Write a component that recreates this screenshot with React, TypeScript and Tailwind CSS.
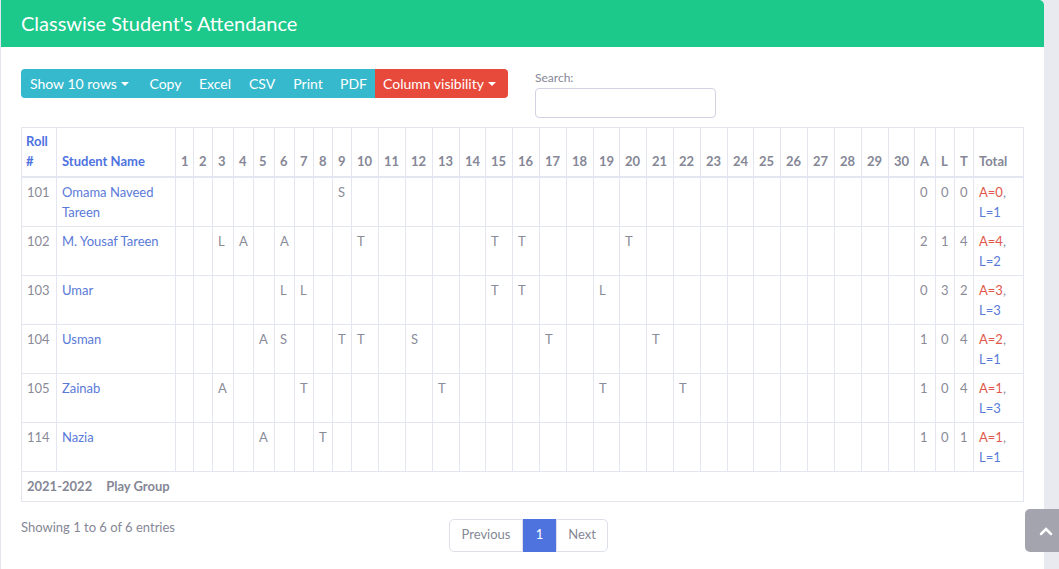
import React from "react";

type Row = {
  roll: string;
  name: string;
  marks: Record<number, string>;
  a: string;
  l: string;
  t: string;
  ta: string;
  tl: string;
};

const rows: Row[] = [
  { roll: "101", name: "Omama Naveed Tareen", marks: { 9: "S" }, a: "0", l: "0", t: "0", ta: "A=0", tl: "L=1" },
  { roll: "102", name: "M. Yousaf Tareen", marks: { 3: "L", 4: "A", 6: "A", 10: "T", 15: "T", 16: "T", 20: "T" }, a: "2", l: "1", t: "4", ta: "A=4", tl: "L=2" },
  { roll: "103", name: "Umar", marks: { 6: "L", 7: "L", 15: "T", 16: "T", 19: "L" }, a: "0", l: "3", t: "2", ta: "A=3", tl: "L=3" },
  { roll: "104", name: "Usman", marks: { 5: "A", 6: "S", 9: "T", 10: "T", 12: "S", 17: "T", 21: "T" }, a: "1", l: "0", t: "4", ta: "A=2", tl: "L=1" },
  { roll: "105", name: "Zainab", marks: { 3: "A", 7: "T", 13: "T", 19: "T", 22: "T" }, a: "1", l: "0", t: "4", ta: "A=1", tl: "L=3" },
  { roll: "114", name: "Nazia", marks: { 5: "A", 8: "T" }, a: "1", l: "0", t: "1", ta: "A=1", tl: "L=1" },
];

const dayWidths = [
  18, 19, 21, 20, 21, 20, 19, 19, 19,
  27, 27, 27, 27, 26, 27, 27, 27, 27, 26, 27, 27, 27, 27, 26, 27, 27, 27, 27, 27, 26,
];
const days = Array.from({ length: 30 }, (_, i) => i + 1);

const font = { fontFamily: "Lato, 'Noto Sans', sans-serif" };

export default function App() {
  return (
    <div className="relative flex w-[1059px] h-[569px] overflow-hidden bg-[#e9eaef]" style={font}>
      <div className="w-[1044px] h-full bg-white border-l border-[#e3e6f0] rounded-tr-[5px] flex flex-col">
        <div className="h-[47px] bg-[#1cc88a] rounded-tr-[5px] flex items-center px-[20px] pb-[2px]">
          <h1 className="text-white text-[20px] leading-none">Classwise Student's Attendance</h1>
        </div>
        <div className="px-[20px] pt-[22px]">
          <div className="flex items-start">
            <div className="flex h-[30px] text-[14px] text-white pb-[1px]">
              <div className="w-[120px] bg-[#36b9cc] rounded-l-[4px] flex items-center pl-[9px]">
                Show 10 rows
                <span className="ml-[4px] inline-block w-0 h-0 border-l-[4px] border-r-[4px] border-t-[4px] border-l-transparent border-r-transparent border-t-white" />
              </div>
              <div className="w-[49px] bg-[#36b9cc] flex items-center justify-center">Copy</div>
              <div className="w-[50px] bg-[#36b9cc] flex items-center justify-center">Excel</div>
              <div className="w-[44px] bg-[#36b9cc] flex items-center justify-center">CSV</div>
              <div className="w-[48px] bg-[#36b9cc] flex items-center justify-center">Print</div>
              <div className="w-[43px] bg-[#36b9cc] flex items-center justify-center">PDF</div>
              <div className="w-[133px] bg-[#e74a3b] rounded-r-[4px] flex items-center pl-[8px]">
                Column visibility
                <span className="ml-[4px] inline-block w-0 h-0 border-l-[4px] border-r-[4px] border-t-[4px] border-l-transparent border-r-transparent border-t-white" />
              </div>
            </div>
            <div className="ml-[27px] flex flex-col">
              <label className="text-[12px] text-[#858796] leading-[16px] mt-[1px]">Search:</label>
              <input className="mt-[2px] w-[181px] h-[30px] border border-[#d1d3e2] rounded-[4px] outline-none" />
            </div>
          </div>

          <table className="mt-[9px] table-fixed border-collapse w-[1002px] text-[13px] leading-[19.5px] text-[#8a8b99]">
            <colgroup>
              <col className="w-[35px]" />
              <col className="w-[119px]" />
              {dayWidths.map((w, i) => (
                <col key={i} style={{ width: w }} />
              ))}
              <col className="w-[21px]" />
              <col className="w-[19px]" />
              <col className="w-[19px]" />
              <col className="w-[50px]" />
            </colgroup>
            <thead>
              <tr className="align-bottom font-bold text-[#858796]">
                <th className="border border-[#e3e6f0] border-b-2 px-[4px] pt-[4px] pb-[5px] text-left text-[#4e73df]">
                  Roll #
                </th>
                <th className="border border-[#e3e6f0] border-b-2 px-[5px] pt-[4px] pb-[5px] text-left text-[#4e73df] whitespace-nowrap">
                  Student Name
                </th>
                {days.map((d) => (
                  <th key={d} className="border border-[#e3e6f0] border-b-2 px-[5px] pt-[4px] pb-[5px] text-left whitespace-nowrap">
                    {d}
                  </th>
                ))}
                <th className="border border-[#e3e6f0] border-b-2 px-[5px] pt-[4px] pb-[5px] text-left">A</th>
                <th className="border border-[#e3e6f0] border-b-2 px-[5px] pt-[4px] pb-[5px] text-left">L</th>
                <th className="border border-[#e3e6f0] border-b-2 px-[5px] pt-[4px] pb-[5px] text-left">T</th>
                <th className="border border-[#e3e6f0] border-b-2 px-[5px] pt-[4px] pb-[5px] text-left">Total</th>
              </tr>
            </thead>
            <tbody>
              {rows.map((r) => (
                <tr key={r.roll} className="align-top">
                  <td className="border border-[#e3e6f0] px-[5px] pt-[5px] pb-[4px]">{r.roll}</td>
                  <td className="border border-[#e3e6f0] px-[5px] pt-[5px] pb-[4px] text-[#5a7ad8]">{r.name}</td>
                  {days.map((d) => (
                    <td key={d} className="border border-[#e3e6f0] px-[5px] pt-[5px] pb-[4px]">
                      {r.marks[d] ?? ""}
                    </td>
                  ))}
                  <td className="border border-[#e3e6f0] px-[5px] pt-[5px] pb-[4px]">{r.a}</td>
                  <td className="border border-[#e3e6f0] px-[5px] pt-[5px] pb-[4px]">{r.l}</td>
                  <td className="border border-[#e3e6f0] px-[5px] pt-[5px] pb-[4px]">{r.t}</td>
                  <td className="border border-[#e3e6f0] px-[5px] pt-[5px] pb-[4px]">
                    <span className="text-[#e0584b]">{r.ta}</span>,
                    <br />
                    <span className="text-[#5a7ad8]">{r.tl}</span>
                  </td>
                </tr>
              ))}
              <tr>
                <td colSpan={36} className="border border-[#e3e6f0] px-[5px] pt-[5px] pb-[4px] font-bold text-[#858796]">
                  2021-2022<span className="ml-[14px]">Play Group</span>
                </td>
              </tr>
            </tbody>
          </table>

          <div className="flex items-start mt-[17px]">
            <div className="w-[428px] leading-[16px] text-[13px] text-[#858796]">Showing 1 to 6 of 6 entries</div>
            <div className="flex h-[33px] text-[13px] text-[#858796]">
              <div className="w-[74px] border border-[#dddfeb] rounded-l-[5px] flex items-center justify-center">Previous</div>
              <div className="w-[33px] bg-[#4e73df] text-white flex items-center justify-center">1</div>
              <div className="w-[52px] border border-[#dddfeb] rounded-r-[5px] flex items-center justify-center">Next</div>
            </div>
          </div>
        </div>
      </div>

      <div className="absolute left-[1025px] top-[509px] w-[44px] h-[43px] rounded-[5px] bg-[#a3a4ad] flex items-center pl-[14px]">
        <svg width="14" height="10" viewBox="0 0 14 10" fill="none" stroke="white" strokeWidth="2.5" strokeLinecap="round">
          <path d="M2 8 L7 3 L12 8" />
        </svg>
      </div>
    </div>
  );
}
